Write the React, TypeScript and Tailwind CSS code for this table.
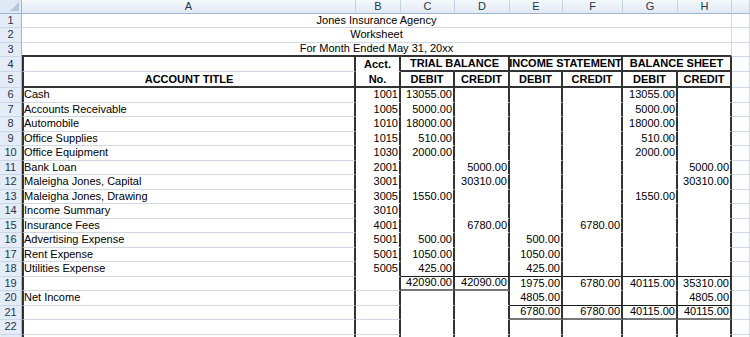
import type { ReactNode } from "react";

const gridR = "border-r border-r-[#d0d7e5]";
const gridB = "border-b border-b-[#d0d7e5]";
const noB = "border-b border-b-white";
const thinB = "border-b border-b-[#1a1a1a]";
const thickB = "border-b-2 border-b-[#333333]";
const dblB = "border-b-2 border-b-[#777777]";
const divR = "border-r-2 border-r-[#333333]";
const edgeL = "border-l-2 border-l-[#333333]";

const letters = ["A", "B", "C", "D", "E", "F", "G", "H", ""];

type Line = [string, string, string, string, string, string, string, string];

const body: Line[] = [
  ["Cash", "1001", "13055.00", "", "", "", "13055.00", ""],
  ["Accounts Receivable", "1005", "5000.00", "", "", "", "5000.00", ""],
  ["Automobile", "1010", "18000.00", "", "", "", "18000.00", ""],
  ["Office Supplies", "1015", "510.00", "", "", "", "510.00", ""],
  ["Office Equipment", "1030", "2000.00", "", "", "", "2000.00", ""],
  ["Bank Loan", "2001", "", "5000.00", "", "", "", "5000.00"],
  ["Maleigha Jones, Capital", "3001", "", "30310.00", "", "", "", "30310.00"],
  ["Maleigha Jones, Drawing", "3005", "1550.00", "", "", "", "1550.00", ""],
  ["Income Summary", "3010", "", "", "", "", "", ""],
  ["Insurance Fees", "4001", "", "6780.00", "", "6780.00", "", ""],
  ["Advertising Expense", "5001", "500.00", "", "500.00", "", "", ""],
  ["Rent Expense", "5001", "1050.00", "", "1050.00", "", "", ""],
  ["Utilities Expense", "5005", "425.00", "", "425.00", "", "", ""],
  ["", "", "42090.00", "42090.00", "1975.00", "6780.00", "40115.00", "35310.00"],
  ["Net Income", "", "", "", "4805.00", "", "", "4805.00"],
  ["", "", "", "", "6780.00", "6780.00", "40115.00", "40115.00"],
  ["", "", "", "", "", "", "", ""],
  ["", "", "", "", "", "", "", ""],
];

// bottom edge of each table cell, row r (sheet row), column c (0 = A)
function bottom(r: number, c: number) {
  if (c === 0) return gridB;
  if (c === 1) return r >= 19 && r <= 22 ? gridB : noB;
  const trial = c <= 3;
  if (r === 18) return thinB;
  if (r === 19) return trial ? dblB : noB;
  if (r === 20) return trial ? noB : thinB;
  if (r === 21) return trial ? noB : dblB;
  return noB;
}

const RowNum = ({ n }: { n?: number }) => (
  <div className="flex items-center justify-center border-r border-b border-r-[#9eb6ce] border-b-[#c9d6e8] bg-[#e4ecf7] text-[11px] leading-none text-[#24364d]">
    {n}
  </div>
);

const Cell = ({ children, className }: { children?: ReactNode; className: string }) => (
  <div className={`flex items-center overflow-hidden whitespace-nowrap bg-white text-[11px] leading-none text-black ${className}`}>
    {children}
  </div>
);

export default function App() {
  return (
    <div className="h-[337px] w-[750px] overflow-hidden bg-white font-['Liberation_Sans',Arial,sans-serif]">
      <div className="grid grid-cols-[22px_334px_45px_54px_55px_53px_60px_55px_54px_18px] grid-rows-[14px_14px_14.5px_14.5px_15px_16px_repeat(17,14.5px)_14px]">
        {/* column headers */}
        <div className="relative border-r border-b border-[#9eb6ce] bg-[#dfe8f5]">
          <svg className="absolute right-[2px] bottom-[2px]" width="9" height="9" viewBox="0 0 9 9">
            <path d="M9 0V9H0Z" fill="#b6c8de" />
          </svg>
        </div>
        {letters.map((l, i) => (
          <div
            key={i}
            className="flex items-center justify-center border-r border-b border-r-[#c5d3e6] border-b-[#9eb6ce] bg-linear-to-b from-[#f6f9fc] to-[#e1e9f4] text-[11px] leading-none text-[#24364d]"
          >
            {l}
          </div>
        ))}

        {/* title rows */}
        <RowNum n={1} />
        <Cell className={`col-span-8 justify-center ${gridR} ${gridB}`}>Jones Insurance Agency</Cell>
        <Cell className={`${gridR} ${gridB}`} />
        <RowNum n={2} />
        <Cell className={`col-span-8 justify-center ${gridR} ${gridB}`}>Worksheet</Cell>
        <Cell className={`${gridR} ${gridB}`} />
        <RowNum n={3} />
        <Cell className={`col-span-8 justify-center ${gridR} ${thickB}`}>For Month Ended May 31, 20xx</Cell>
        <Cell className={`${gridR} ${gridB}`} />

        {/* row 4 */}
        <RowNum n={4} />
        <Cell className={`${edgeL} ${divR} ${gridB}`} />
        <Cell className={`justify-center font-bold ${divR} ${noB}`}>Acct.</Cell>
        <Cell className={`col-span-2 justify-center font-bold ${divR} ${thickB}`}>TRIAL BALANCE</Cell>
        <Cell className={`col-span-2 justify-center font-bold ${divR} ${thickB}`}>INCOME STATEMENT</Cell>
        <Cell className={`col-span-2 justify-center font-bold ${divR} ${thickB}`}>BALANCE SHEET</Cell>
        <Cell className={`${gridR} ${gridB}`} />

        {/* row 5 */}
        <RowNum n={5} />
        <Cell className={`justify-center font-bold ${edgeL} ${divR} ${thickB}`}>ACCOUNT TITLE</Cell>
        <Cell className={`justify-center font-bold ${divR} ${thickB}`}>No.</Cell>
        {["DEBIT", "CREDIT", "DEBIT", "CREDIT", "DEBIT", "CREDIT"].map((h, i) => (
          <Cell key={i} className={`justify-center font-bold ${divR} ${thickB}`}>
            {h}
          </Cell>
        ))}
        <Cell className={`${gridR} ${gridB}`} />

        {/* body */}
        {body.map((line, i) => {
          const r = i + 6;
          return [
            <RowNum key={`n${r}`} n={r < 23 ? r : undefined} />,
            ...line.map((t, c) => (
              <Cell
                key={`${r}-${c}`}
                className={`${c === 0 ? `justify-start ${edgeL}` : "justify-end pr-px"} ${divR} ${bottom(r, c)}`}
              >
                {t}
              </Cell>
            )),
            <Cell key={`i${r}`} className={`${gridR} ${gridB}`} />,
          ];
        })}
      </div>
    </div>
  );
}
